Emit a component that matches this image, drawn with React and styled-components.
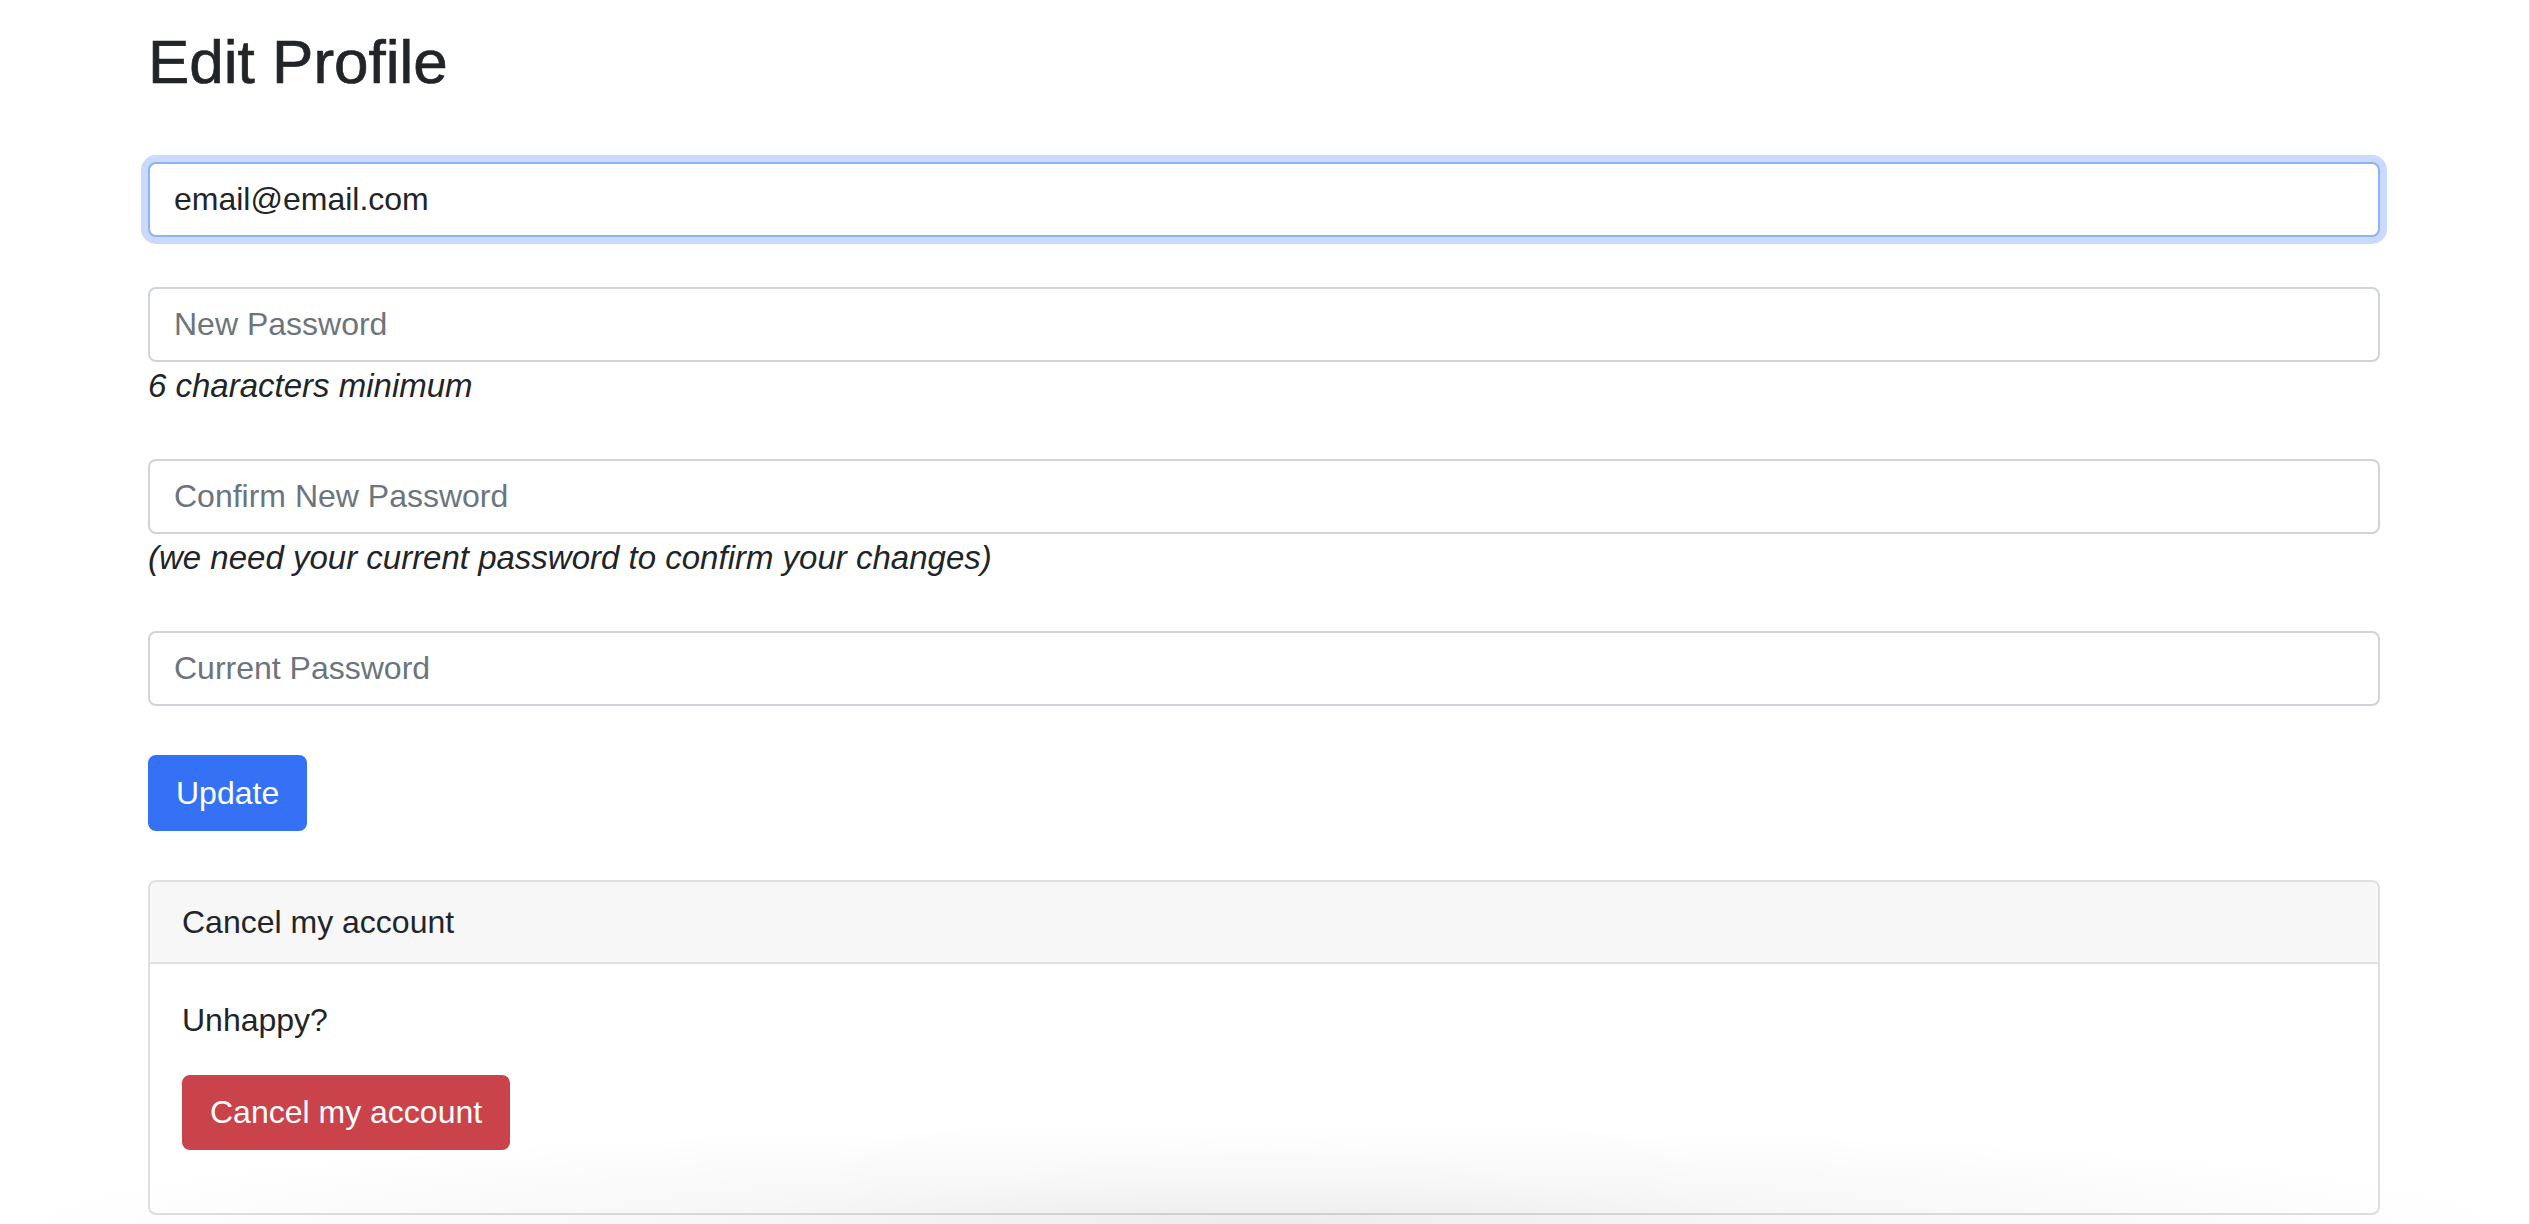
import styled, { createGlobalStyle } from 'styled-components'

const GlobalStyle = createGlobalStyle`
  * { box-sizing: border-box; }
  body {
    margin: 0;
    background: #fff;
    font-family: "Liberation Sans", Arial, sans-serif;
    color: #212529;
  }
`

const Page = styled.div`
  position: relative;
  min-height: 100vh;
  border-right: 1px solid #dcdcdc;
  overflow: hidden;
`

const Container = styled.div`
  width: 2232px;
  margin-left: 148px;
`

const Title = styled.h2`
  margin: 25px 0 63px;
  font-size: 62px;
  font-weight: 500;
  line-height: 1.2;
  -webkit-text-stroke: 0.7px #212529;
`

const Form = styled.form`
  display: flex;
  flex-direction: column;
`

const FormGroup = styled.div`
  margin-bottom: ${p => p.$gap || 49}px;
`

const Input = styled.input`
  display: block;
  width: 100%;
  height: 75px;
  padding: 0 24px;
  font-family: inherit;
  font-size: 32px;
  color: #212529;
  background: #fff;
  border: 2px solid ${p => (p.$focus ? '#8db2f7' : '#ced4da')};
  border-radius: 8px;
  outline: none;
  box-shadow: ${p => (p.$focus ? '0 0 0 7px #cad9fc' : 'none')};

  &::placeholder {
    color: #6c757d;
  }
`

const Help = styled.small`
  display: block;
  font-size: 33px;
  line-height: 48px;
  font-style: italic;
  color: #212529;
`

const Button = styled.button`
  display: inline-flex;
  align-items: center;
  height: ${p => p.$h || 76}px;
  padding: 0 26px;
  font-family: inherit;
  font-size: 32px;
  color: #fff;
  background: ${p => (p.$danger ? '#cb434a' : '#3471f5')};
  border: 2px solid ${p => (p.$danger ? '#cb434a' : '#3471f5')};
  border-radius: 8px;
  cursor: pointer;
`

const Actions = styled.div`
  margin-bottom: 49px;
`

const Card = styled.div`
  border: 2px solid #dfdfdf;
  border-radius: 8px;
  overflow: hidden;
`

const CardHeader = styled.div`
  height: 82px;
  padding: 0 32px;
  font-size: 32px;
  line-height: 80px;
  background: #f7f7f7;
  border-bottom: 2px solid #dfdfdf;
`

const CardBody = styled.div`
  padding: 32px 32px 63px;
`

const Text = styled.p`
  margin: 0 0 31px;
  font-size: 32px;
  line-height: 48px;
`

const BottomShade = styled.div`
  position: absolute;
  left: 0;
  right: 0;
  bottom: 0;
  height: 100px;
  pointer-events: none;
  background: radial-gradient(ellipse 50% 100% at 50% 100%, rgba(0,0,0,0.075), rgba(0,0,0,0.03) 45%, rgba(0,0,0,0) 100%);
`

const App = () => {
  return (
    <>
      <GlobalStyle />
      <Page>
        <Container>
          <Title>Edit Profile</Title>
          <Form>
            <FormGroup $gap={50}>
              <Input $focus type="email" defaultValue="email@email.com" />
            </FormGroup>
            <FormGroup>
              <Input type="password" placeholder="New Password" />
              <Help>6 characters minimum</Help>
            </FormGroup>
            <FormGroup>
              <Input type="password" placeholder="Confirm New Password" />
              <Help>(we need your current password to confirm your changes)</Help>
            </FormGroup>
            <FormGroup>
              <Input type="password" placeholder="Current Password" />
            </FormGroup>
            <Actions>
              <Button type="button">Update</Button>
            </Actions>
          </Form>
          <Card>
            <CardHeader>Cancel my account</CardHeader>
            <CardBody>
              <Text>Unhappy?</Text>
              <Button type="button" $danger $h={75}>Cancel my account</Button>
            </CardBody>
          </Card>
        </Container>
        <BottomShade />
      </Page>
    </>
  )
}

export default App
